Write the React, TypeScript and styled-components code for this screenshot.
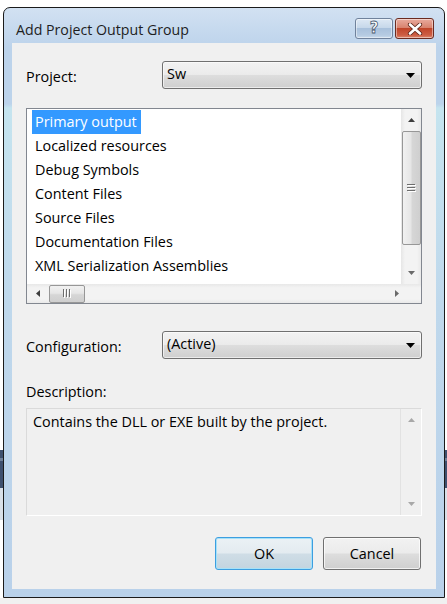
import React from "react";
import styled, { createGlobalStyle } from "styled-components";

const GlobalStyle = createGlobalStyle`
  html, body { margin: 0; padding: 0; height: 100%; }
  body {
    font-family: "Open Sans", "Noto Sans", "Liberation Sans", sans-serif;
    font-size: 14.4px;
    color: #000;
    background: linear-gradient(
      to bottom,
      #ffffff 0, #ffffff 450px,
      #3e506e 450px, #3e506e 458px,
      #6f8099 458px, #6f8099 461px,
      #3e506e 461px, #3e506e 488px,
      #d9e0e8 488px, #d9e0e8 520px,
      #ffffff 520px, #ffffff 598px,
      #f0f0f0 598px
    );
  }
  #root { height: 100%; }
`;

const Screen = styled.div`
  padding: 7px 0 0 3px;
`;

const Window = styled.div`
  box-sizing: border-box;
  width: 442px;
  height: 591px;
  border: 1px solid #1b1b1b;
  border-radius: 7px 7px 0 0;
  background: linear-gradient(to bottom, #d2e1f2 0, #bcd3eb 40px, #bcd3eb 96px, #c5e4ef 100px, #bfd8ec 300px, #b9d1ea 100%);
  display: flex;
  flex-direction: column;
  padding: 0 8px 8px 8px;
`;

const TitleBar = styled.div`
  height: 35px;
  display: flex;
  align-items: flex-start;
  justify-content: space-between;
`;

const Title = styled.div`
  padding: 12px 0 0 4px;
  line-height: 20px;
  font-size: 14.2px;
  color: #1e1e1e;
`;

const CaptionButtons = styled.div`
  display: flex;
  gap: 2px;
  margin: 10px 2px 0 0;
`;

const CaptionButton = styled.div<{ $variant: "help" | "close" }>`
  box-sizing: border-box;
  width: ${(p) => (p.$variant === "close" ? 39 : 38)}px;
  height: 21px;
  border-radius: 3px;
  display: flex;
  align-items: center;
  justify-content: center;
  border: 1px solid ${(p) => (p.$variant === "close" ? "#6b2b20" : "#70829c")};
  box-shadow: inset 0 0 0 1px rgba(255, 255, 255, 0.45);
  background: ${(p) =>
    p.$variant === "close"
      ? "linear-gradient(to bottom, #e9ab9e 0%, #d8836f 45%, #c0452a 50%, #cd5e44 85%, #dc8a70 100%)"
      : "linear-gradient(to bottom, #dde8f4 0%, #c7d8ea 45%, #a9c1dc 50%, #b6cbe2 85%, #c9daeb 100%)"};
`;

const HelpGlyph = styled.span`
  font-family: "DejaVu Sans", sans-serif;
  font-weight: bold;
  font-size: 15px;
  line-height: 1;
  color: #fff;
  -webkit-text-stroke: 0.8px #4b5a70;
`;

const Client = styled.div`
  flex: 1;
  background: #f0f0f0;
  padding: 18px 14px 0 14px;
  display: flex;
  flex-direction: column;
`;

const FieldRow = styled.div<{ $top: number }>`
  display: flex;
  align-items: center;
  height: 28px;
  margin-top: ${(p) => p.$top}px;
`;

const Label = styled.div`
  width: 136px;
  padding-top: 4px;
  line-height: 20px;
`;

const Combo = styled.div`
  box-sizing: border-box;
  width: 260px;
  height: 28px;
  border: 1px solid #707070;
  border-radius: 3px;
  background: linear-gradient(to bottom, #f2f2f2 0%, #ebebeb 48%, #dddddd 52%, #cfcfcf 100%);
  box-shadow: inset 0 0 0 1px rgba(255, 255, 255, 0.6);
  display: flex;
  align-items: flex-start;
  justify-content: space-between;
  padding: 2px 6px 0 4px;
  line-height: 20px;
`;

const ListBox = styled.div`
  box-sizing: border-box;
  margin-top: 19px;
  height: 196px;
  border: 1px solid #828790;
  background: #fff;
  display: grid;
  grid-template-columns: 1fr 20px;
  grid-template-rows: 1fr 19px;
`;

const ListItems = styled.div`
  padding: 1px 0 0 5px;
  overflow: hidden;
`;

const Item = styled.div<{ $selected?: boolean }>`
  width: fit-content;
  height: 24px;
  line-height: 24px;
  padding: 0 4px 0 3px;
  white-space: nowrap;
  background: ${(p) => (p.$selected ? "#3399ff" : "transparent")};
  color: ${(p) => (p.$selected ? "#fff" : "#000")};
`;

const VScroll = styled.div`
  background: linear-gradient(to right, #e6e6e6 0, #f3f3f3 20%, #f3f3f3 80%, #e9e9e9 100%);
  display: flex;
  flex-direction: column;
  align-items: center;
`;

const ArrowBox = styled.div<{ $h: number }>`
  height: ${(p) => p.$h}px;
  width: 100%;
  display: flex;
  align-items: center;
  justify-content: center;
`;

const VThumb = styled.div`
  box-sizing: border-box;
  width: 19px;
  height: 114px;
  margin-left: 1px;
  border: 1px solid #979797;
  border-radius: 2px;
  background: linear-gradient(to right, #f1f1f1 0%, #e6e6e6 45%, #d6d6d6 55%, #cfcfcf 100%);
  display: flex;
  align-items: center;
  justify-content: center;
`;

const HScroll = styled.div`
  grid-column: 1 / 3;
  background: linear-gradient(to bottom, #e8e8e8 0, #f3f3f3 20%, #f3f3f3 80%, #e9e9e9 100%);
  display: flex;
  align-items: center;
`;

const HThumb = styled.div`
  box-sizing: border-box;
  width: 36px;
  height: 18px;
  border: 1px solid #979797;
  border-radius: 2px;
  background: linear-gradient(to bottom, #f1f1f1 0%, #e6e6e6 45%, #d6d6d6 55%, #cfcfcf 100%);
  display: flex;
  align-items: center;
  justify-content: center;
`;

const HSpacer = styled.div`
  flex: 1;
`;

const SectionLabel = styled.div`
  margin-top: 23px;
  line-height: 20px;
`;

const DescBox = styled.div`
  box-sizing: border-box;
  margin-top: 6px;
  height: 108px;
  border: 1px solid #dadada;
  border-right-color: #ffffff;
  border-bottom-color: #ffffff;
  display: grid;
  grid-template-columns: 1fr 21px;
`;

const DescText = styled.div`
  padding: 3px 0 0 6px;
  line-height: 20px;
`;

const DescScroll = styled.div`
  border-left: 1px solid #e2e2e2;
  display: flex;
  flex-direction: column;
  justify-content: space-between;
`;

const Buttons = styled.div`
  margin-top: 21px;
  display: flex;
  justify-content: flex-end;
  gap: 10px;
  padding-right: 1px;
`;

const PushButton = styled.div<{ $default?: boolean }>`
  box-sizing: border-box;
  width: 98px;
  height: 33px;
  border-radius: 3px;
  border: 1px solid ${(p) => (p.$default ? "#3c9ee0" : "#707070")};
  box-shadow: inset 0 0 0 1px ${(p) => (p.$default ? "#a6e1f8" : "rgba(255,255,255,0.7)")};
  background: ${(p) =>
    p.$default
      ? "linear-gradient(to bottom, #ebf1f5 0%, #e3ebf0 48%, #cfdde6 52%, #c3d4df 100%)"
      : "linear-gradient(to bottom, #f2f2f2 0%, #ebebeb 48%, #dddddd 52%, #cfcfcf 100%)"};
  display: flex;
  align-items: center;
  justify-content: center;
  line-height: 20px;
`;

type Dir = "up" | "down" | "left" | "right";

const Arrow: React.FC<{ dir: Dir; color?: string }> = ({ dir, color = "#3f3f3f" }) => {
  const pts: Record<Dir, string> = {
    up: "0,4 7,4 3.5,0",
    down: "0,0 7,0 3.5,4",
    left: "4,0 4,7 0,3.5",
    right: "0,0 0,7 4,3.5",
  };
  const vertical = dir === "up" || dir === "down";
  return (
    <svg width={vertical ? 7 : 4} height={vertical ? 4 : 7} viewBox={vertical ? "0 0 7 4" : "0 0 4 7"}>
      <polygon points={pts[dir]} fill={color} />
    </svg>
  );
};

const ComboArrow = () => (
  <svg width="9" height="5" viewBox="0 0 9 5" style={{ marginTop: 9 }}>
    <polygon points="0,0 9,0 4.5,5" fill="#000" />
  </svg>
);

const Grip: React.FC<{ vertical?: boolean }> = ({ vertical }) =>
  vertical ? (
    <svg width="9" height="8" viewBox="0 0 9 8">
      {[0, 3, 6].map((y) => (
        <g key={y}>
          <rect x="0" y={y} width="8" height="1" fill="#6d6d6d" />
          <rect x="1" y={y + 1} width="8" height="1" fill="#ffffff" />
        </g>
      ))}
    </svg>
  ) : (
    <svg width="8" height="9" viewBox="0 0 8 9">
      {[0, 3, 6].map((x) => (
        <g key={x}>
          <rect x={x} y="0" width="1" height="8" fill="#6d6d6d" />
          <rect x={x + 1} y="1" width="1" height="8" fill="#ffffff" />
        </g>
      ))}
    </svg>
  );

const CloseIcon = () => (
  <svg width="16" height="12" viewBox="0 0 16 12">
    <path d="M3 1.5 L13 10.5 M13 1.5 L3 10.5" stroke="#5a2418" strokeWidth="4.2" strokeLinecap="round" />
    <path d="M3 1.5 L13 10.5 M13 1.5 L3 10.5" stroke="#ffffff" strokeWidth="2.6" strokeLinecap="round" />
  </svg>
);

const items = [
  "Primary output",
  "Localized resources",
  "Debug Symbols",
  "Content Files",
  "Source Files",
  "Documentation Files",
  "XML Serialization Assemblies",
];

export default function App() {
  return (
    <>
      <GlobalStyle />
      <Screen>
        <Window>
          <TitleBar>
            <Title>Add Project Output Group</Title>
            <CaptionButtons>
              <CaptionButton $variant="help">
                <HelpGlyph>?</HelpGlyph>
              </CaptionButton>
              <CaptionButton $variant="close">
                <CloseIcon />
              </CaptionButton>
            </CaptionButtons>
          </TitleBar>
          <Client>
            <FieldRow $top={0}>
              <Label>Project:</Label>
              <Combo>
                <span>Sw</span>
                <ComboArrow />
              </Combo>
            </FieldRow>
            <ListBox>
              <ListItems>
                {items.map((it, i) => (
                  <Item key={it} $selected={i === 0}>
                    {it}
                  </Item>
                ))}
              </ListItems>
              <VScroll>
                <ArrowBox $h={22}>
                  <Arrow dir="up" />
                </ArrowBox>
                <VThumb>
                  <Grip vertical />
                </VThumb>
                <HSpacer />
                <ArrowBox $h={22}>
                  <Arrow dir="down" color="#6a6a6a" />
                </ArrowBox>
              </VScroll>
              <HScroll>
                <ArrowBox $h={19} style={{ width: 22 }}>
                  <Arrow dir="left" />
                </ArrowBox>
                <HThumb>
                  <Grip />
                </HThumb>
                <HSpacer />
                <ArrowBox $h={19} style={{ width: 48 }}>
                  <Arrow dir="right" color="#6a6a6a" />
                </ArrowBox>
              </HScroll>
            </ListBox>
            <FieldRow $top={27}>
              <Label>Configuration:</Label>
              <Combo>
                <span>(Active)</span>
                <ComboArrow />
              </Combo>
            </FieldRow>
            <SectionLabel>Description:</SectionLabel>
            <DescBox>
              <DescText>Contains the DLL or EXE built by the project.</DescText>
              <DescScroll>
                <ArrowBox $h={22}>
                  <Arrow dir="up" color="#a8a8a8" />
                </ArrowBox>
                <ArrowBox $h={22}>
                  <Arrow dir="down" color="#a8a8a8" />
                </ArrowBox>
              </DescScroll>
            </DescBox>
            <Buttons>
              <PushButton $default>OK</PushButton>
              <PushButton>Cancel</PushButton>
            </Buttons>
          </Client>
        </Window>
      </Screen>
    </>
  );
}
